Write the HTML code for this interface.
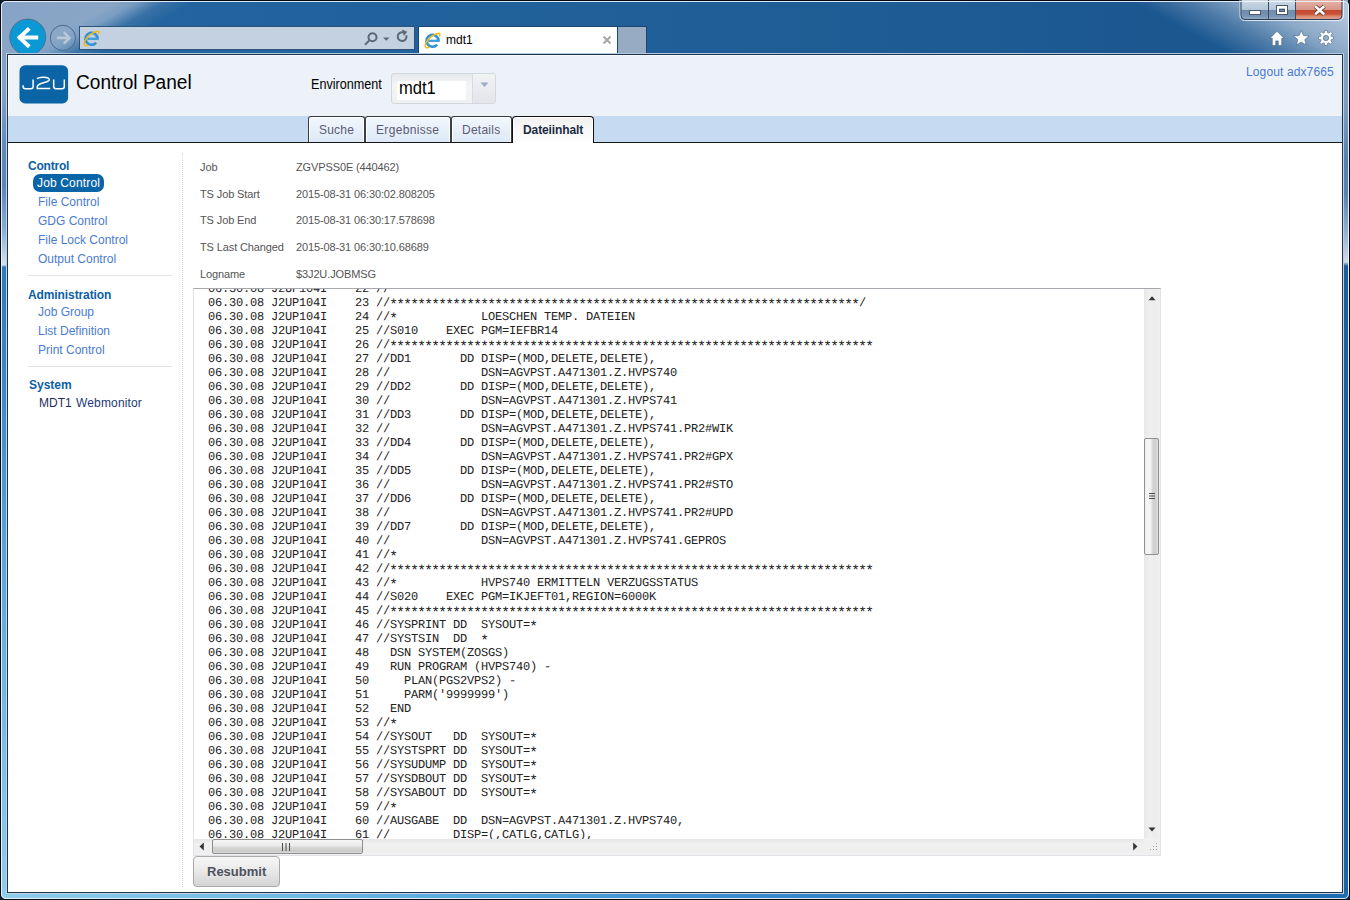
<!DOCTYPE html>
<html><head><meta charset="utf-8">
<style>
*{box-sizing:border-box;margin:0;padding:0}
html,body{width:1350px;height:900px;overflow:hidden;background:#0a1a2a}
body{position:relative;font-family:"Liberation Sans",sans-serif}
.a{position:absolute}
.t{white-space:pre}
.st{font-size:14.5px;letter-spacing:-1.7013px;line-height:0;position:relative;top:3.2px;left:-0.7px}
#win{left:0;top:0;width:1350px;height:900px;border:1px solid #050a12;border-radius:6px 6px 6px 6px;overflow:hidden;
 background:linear-gradient(to bottom,#86a3c5 0,#84a1c4 90px,#6089b8 150px,#5a87ba 185px,#88acd2 228px,#c5d6e8 256px,#d0dfee 264px,#2b7cbf 266px,#3a88c8 380px,#5aa6db 560px,#7cc0e6 760px,#8ecdeb 900px)}
#winhl{left:1px;top:1px;width:1348px;height:898px;border:1px solid rgba(240,246,252,.9);border-radius:5px}
#rightcol{left:1343px;top:0;width:5px;height:893px;background:linear-gradient(to bottom,#8fa9c7 0,#7f9cbf 110px,#5580ae 160px,#5a84b0 195px,#9ab4d0 235px,#cfdbe8 262px,#1f5e9c 266px,#1f64a6 893px)}
#botrow{left:1px;top:892px;width:1348px;height:7px;border-radius:0 0 5px 5px;background:linear-gradient(to right,#8ecdeb 0,#6db8e4 300px,#3d8fd0 700px,#2370b5 1100px,#1f6db0 1350px)}
#title{left:1px;top:1px;width:1348px;height:52px;border-radius:5px 5px 0 0;
 background:
  linear-gradient(150deg,rgba(134,162,196,1) 0,rgba(138,166,199,1) 8%,rgba(150,176,205,.75) 9.5%,rgba(120,150,190,.25) 11.5%,rgba(120,150,190,0) 13.5%),
  linear-gradient(28deg,rgba(150,178,208,0) 85%,rgba(140,168,200,.45) 89%,rgba(160,184,210,.85) 93%,rgba(180,198,220,1) 98%),
  linear-gradient(to right,#2466a0,#22629c 30%,#1f5d95 60%,#1c5790 85%,#1d5a90)}
#content{left:8px;top:55px;width:1334px;height:837px;background:#fff;overflow:hidden}
#cborder{left:6px;top:53px;width:1338px;height:841px;border:1px solid #c4d3e4;border-top-color:#b4c8de}
#cborder2{left:7px;top:54px;width:1336px;height:839px;border:1px solid #1b3550;}
</style></head>
<body>
<div id="win" class="a"></div>
<div id="rightcol" class="a"></div>
<div id="botrow" class="a"></div>
<div id="title" class="a"></div>

<svg class="a" style="left:0;top:0" width="1350" height="54" viewBox="0 0 1350 54">
 <defs>
  <linearGradient id="gmin" x1="0" y1="0" x2="0" y2="1">
   <stop offset="0" stop-color="#cfdbe8"/><stop offset=".5" stop-color="#b4c6da"/><stop offset=".55" stop-color="#6f8aab"/><stop offset=".85" stop-color="#7893b3"/><stop offset="1" stop-color="#94abc6"/>
  </linearGradient>
  <linearGradient id="gcls" x1="0" y1="0" x2="0" y2="1">
   <stop offset="0" stop-color="#e6b2a8"/><stop offset=".5" stop-color="#d8968a"/><stop offset=".55" stop-color="#c4482e"/><stop offset=".75" stop-color="#c9553a"/><stop offset=".85" stop-color="#d88a70"/><stop offset="1" stop-color="#e0a090"/>
  </linearGradient>
  <radialGradient id="gie" cx=".5" cy=".5" r=".55">
   <stop offset="0" stop-color="#a8e2fc"/><stop offset="1" stop-color="#2a8ad4"/>
  </radialGradient>
  <g id="ie">
   <path d="M14.4 8.8A5.9 5.9 0 1 0 13 12.6" fill="none" stroke="url(#gie)" stroke-width="2.8"/>
   <path d="M4.2 8.8H15.8" stroke="#3d9fe0" stroke-width="2.3"/>
   <path d="M5.5 15.3C3 16.2 .9 15.4 1.1 13.4 1.5 10 5.5 5 10 2.8 13 1.3 15.6.8 15.9 2c.2.8-.1 1.8-.7 2.4" fill="none" stroke="#f4ba10" stroke-width="1.5"/>
  </g>
 </defs>
 <!-- back button -->
 <circle cx="27.8" cy="37.1" r="18" fill="#0b99d6" stroke="#4f6f8c" stroke-width="1"/>
 <path d="M18.2 37.5H38.2" stroke="#fff" stroke-width="4"/>
 <path d="M29.3 28.4L19.6 37.6 29.3 46.8" fill="none" stroke="#fff" stroke-width="4"/>
 <!-- forward -->
 <circle cx="62.9" cy="37.9" r="12.6" fill="rgba(150,175,205,.18)" stroke="#4d6a8a" stroke-width="1"/>
 <path d="M56.8 37.9H69.4M63.8 32.2L69.4 37.9 63.8 43.6" fill="none" stroke="#b9c8d8" stroke-width="2.6"/>
 <!-- address bar -->
 <rect x="79.5" y="26.5" width="335" height="23" fill="#c3d1e1" stroke="#2d5379" stroke-width="1"/>
 <use href="#ie" x="83" y="30"/>
 <g fill="none" stroke="#5e6875" stroke-width="2">
  <circle cx="372.5" cy="37.2" r="4"/>
  <path d="M369.6 40.1L365 44.7"/>
 </g>
 <path d="M383 37.5h6.5l-3.25 3.3z" fill="#5e6875"/>
 <path d="M406.3 35.2a4.4 4.4 0 1 1-3.2-2.9" fill="none" stroke="#5e6875" stroke-width="2"/>
 <path d="M402 29.6l5.3 2.2-3.5 4.2z" fill="#5e6875"/>
 <!-- tab -->
 <rect x="418.5" y="26.5" width="199" height="28" fill="#fff" stroke="#1a4670" stroke-width="1"/>
 <use href="#ie" x="424" y="32"/>
 <path d="M603.5 36.5L610.5 43.5M610.5 36.5L603.5 43.5" stroke="#a6a6a6" stroke-width="2"/>
 <rect x="617.5" y="26.5" width="29" height="28" fill="#97abc3" stroke="#1a4670" stroke-width="1"/>
 <!-- window controls -->
 <path d="M1240.5 0V15.5a4.5 4.5 0 0 0 4.5 4.5H1338.5a4.5 4.5 0 0 0 4.5-4.5V0" fill="rgba(220,230,240,.6)"/>
 <path d="M1241.5 0V15a4 4 0 0 0 4 4H1268V0z" fill="url(#gmin)"/>
 <path d="M1269 0H1295V19H1269z" fill="url(#gmin)"/>
 <path d="M1296 0H1342V15a4 4 0 0 1-4 4H1296z" fill="url(#gcls)"/>
 <path d="M1240 0V16a4.5 4.5 0 0 0 4.5 4.5H1339a4.5 4.5 0 0 0 4.5-4.5V0" fill="none" stroke="rgba(235,242,250,.85)" stroke-width="1"/>
 <path d="M1241 0V15.5a4 4 0 0 0 4 4H1338a4 4 0 0 0 4-4V0" fill="none" stroke="#2b3d52" stroke-width="1"/>
 <path d="M1268.5 0V19M1295.5 0V19" stroke="#3d4d60" stroke-width="1"/>
 <rect x="1249.5" y="10.5" width="11" height="4" fill="#fff" stroke="#4a5868" stroke-width="1"/>
 <rect x="1276.5" y="5.5" width="11" height="9" fill="none" stroke="#4a5868" stroke-width="1"/>
 <rect x="1278" y="7" width="8" height="6" fill="none" stroke="#fff" stroke-width="2"/>
 <rect x="1279.5" y="9.5" width="5" height="2" fill="none" stroke="#4a5868" stroke-width="1"/>
 <path d="M1315.2 6.2L1324.2 14.2M1324.2 6.2L1315.2 14.2" stroke="#55302a" stroke-width="4.2"/>
 <path d="M1315.2 6.2L1324.2 14.2M1324.2 6.2L1315.2 14.2" stroke="#fff" stroke-width="2.6"/>
 <!-- toolbar icons -->
 <path d="M1277 31.3L1270 38.3h2.3V45.5h3.4v-4.6h2.6v4.6h3.4V38.3h2.3z" fill="#fff" stroke="#35506e" stroke-width=".5"/>
 <path d="M1301.3 30.5l2.2 5.1 5.5.4-4.2 3.6 1.3 5.4-4.8-2.9-4.8 2.9 1.3-5.4-4.2-3.6 5.5-.4z" fill="#fff" stroke="#35506e" stroke-width=".5"/>
 <g transform="translate(1326,38)"><path d="M5.41 -1.44 L7.50 -1.21 L7.50 1.21 L5.41 1.44 L4.84 2.81 L6.16 4.45 L4.45 6.16 L2.81 4.84 L1.44 5.41 L1.21 7.50 L-1.21 7.50 L-1.44 5.41 L-2.81 4.84 L-4.45 6.16 L-6.16 4.45 L-4.84 2.81 L-5.41 1.44 L-7.50 1.21 L-7.50 -1.21 L-5.41 -1.44 L-4.84 -2.81 L-6.16 -4.45 L-4.45 -6.16 L-2.81 -4.84 L-1.44 -5.41 L-1.21 -7.50 L1.21 -7.50 L1.44 -5.41 L2.81 -4.84 L4.45 -6.16 L6.16 -4.45 L4.84 -2.81Z M2.7 0 A2.7 2.7 0 1 0 -2.7 0 A2.7 2.7 0 1 0 2.7 0Z" fill="#fff" fill-rule="evenodd" stroke="#35506e" stroke-width=".5"/></g>
</svg>
<div class="a t" style="left:446px;top:34px;font-size:12px;line-height:12px;color:#000">mdt1</div>
<div id="winhl" class="a"></div>
<div id="cborder" class="a"></div>
<div id="cborder2" class="a"></div>
<div id="content" class="a"></div>
<div class="a" style="left:8px;top:55px;width:1334px;height:61px;background:#edf1f8;border-top:1px solid #f7f9fd;border-left:1px solid #fafcfe"></div>
<div class="a" style="left:8px;top:116px;width:1334px;height:26px;background:#c6dbf1"></div>
<div class="a" style="left:8px;top:142px;width:1334px;height:1px;background:#161616"></div>
<svg class="a" style="left:0;top:0" width="80" height="110">
<rect x="19.5" y="65.3" width="48.6" height="38.2" rx="5.6" fill="#0a64a5"/>
<g fill="none" stroke="#fff" stroke-width="1.5">
<path d="M23.1 85.2V86.6a2.2 2.2 0 0 0 2.2 2.2h5.6a2.2 2.2 0 0 0 2.2-2.2V79.6"/>
<path d="M37 78.6C39.5 76.6 48.6 76.4 49.3 79.6C49.9 82.6 38.2 82.3 37.3 86.3V88.5H50.2"/>
<path d="M53.7 79.6V86.6a2.2 2.2 0 0 0 2.2 2.2h6.2a2.2 2.2 0 0 0 2.2-2.2V79.6"/>
</g></svg>
<div class="a t" style="left:75.7px;top:72.1px;font-size:20px;line-height:20px;color:#000;font-weight:normal;transform:scaleX(.955);transform-origin:0 0">Control Panel</div>
<div class="a t" style="left:311px;top:77.15px;font-size:14px;line-height:14px;color:#000;font-weight:normal;transform:scaleX(.9);transform-origin:0 0">Environment</div>
<div class="a" style="left:391px;top:73px;width:105px;height:31px;border:1px solid #d4d8de;border-radius:3px;background:linear-gradient(#e6e8eb,#f4f5f7 40%,#eef0f2)"></div>
<div class="a" style="left:397px;top:81px;width:69px;height:19px;background:#fff"></div>
<div class="a" style="left:472px;top:74px;width:1px;height:29px;background:#d8dbe0"></div>
<div class="a" style="left:473px;top:74px;width:22px;height:29px;border-radius:0 2px 2px 0;background:linear-gradient(#f2f3f5,#e2e4e8)"></div>
<svg class="a" style="left:480px;top:82px" width="10" height="6"><path d="M0.5 0.5h8l-4 4.5z" fill="#9aaec6"/></svg>
<div class="a t" style="left:398.5px;top:79.0px;font-size:18px;line-height:18px;color:#000;font-weight:normal;transform:scaleX(.92);transform-origin:0 0">mdt1</div>
<div class="a t" style="left:1246px;top:65.84px;font-size:12px;line-height:12px;color:#4a7bd2;font-weight:normal;letter-spacing:0.12px">Logout adx7665</div>
<div class="a" style="left:308px;top:116px;width:57px;height:26px;border:1px solid #3b3e45;border-bottom:none;border-radius:3px 3px 0 0;background:linear-gradient(#f2f7fd,#dde9f6);box-shadow:inset 1px 1px 0 #fff,inset -1px 0 0 #fff"></div>
<div class="a" style="left:365px;top:116px;width:86px;height:26px;border:1px solid #3b3e45;border-bottom:none;border-radius:3px 3px 0 0;background:linear-gradient(#f2f7fd,#dde9f6);box-shadow:inset 1px 1px 0 #fff,inset -1px 0 0 #fff"></div>
<div class="a" style="left:451px;top:116px;width:61px;height:26px;border:1px solid #3b3e45;border-bottom:none;border-radius:3px 3px 0 0;background:linear-gradient(#f2f7fd,#dde9f6);box-shadow:inset 1px 1px 0 #fff,inset -1px 0 0 #fff"></div>
<div class="a" style="left:512px;top:116px;width:82px;height:27px;border:1px solid #111;border-bottom:none;border-radius:4px 4px 0 0;background:linear-gradient(#f0f0f0,#fafafa 60%,#fff);box-shadow:inset 1px 1px 0 #fff,inset -1px 0 0 #fff"></div>
<div class="a t" style="left:319px;top:123.84px;font-size:12px;line-height:12px;color:#5b5b73;font-weight:normal;letter-spacing:.2px">Suche</div>
<div class="a t" style="left:376px;top:123.84px;font-size:12px;line-height:12px;color:#5b5b73;font-weight:normal;letter-spacing:.33px">Ergebnisse</div>
<div class="a t" style="left:462px;top:123.84px;font-size:12px;line-height:12px;color:#5b5b73;font-weight:normal;letter-spacing:.25px">Details</div>
<div class="a t" style="left:523px;top:123.84px;font-size:12px;line-height:12px;color:#1b2a44;font-weight:bold;letter-spacing:-.1px">Dateiinhalt</div>
<div class="a t" style="left:28px;top:159.84px;font-size:12px;line-height:12px;color:#0c5fa6;font-weight:bold;letter-spacing:-.2px">Control</div>
<div class="a" style="left:33px;top:174px;width:71px;height:18px;border-radius:7px;background:#0965a7"></div>
<div class="a t" style="left:37px;top:176.84px;font-size:12px;line-height:12px;color:#fff;font-weight:normal;letter-spacing:.15px">Job Control</div>
<div class="a t" style="left:38px;top:195.84px;font-size:12px;line-height:12px;color:#4a7bd2;font-weight:normal;">File Control</div>
<div class="a t" style="left:38px;top:214.84px;font-size:12px;line-height:12px;color:#4a7bd2;font-weight:normal;">GDG Control</div>
<div class="a t" style="left:38px;top:233.84px;font-size:12px;line-height:12px;color:#4a7bd2;font-weight:normal;">File Lock Control</div>
<div class="a t" style="left:38px;top:252.84px;font-size:12px;line-height:12px;color:#4a7bd2;font-weight:normal;">Output Control</div>
<div class="a" style="left:28px;top:275px;width:144px;height:1px;background:#e3e3e3"></div>
<div class="a t" style="left:28px;top:288.84px;font-size:12px;line-height:12px;color:#0c5fa6;font-weight:bold;letter-spacing:-.1px">Administration</div>
<div class="a t" style="left:38px;top:305.84px;font-size:12px;line-height:12px;color:#4a7bd2;font-weight:normal;">Job Group</div>
<div class="a t" style="left:38px;top:324.84px;font-size:12px;line-height:12px;color:#4a7bd2;font-weight:normal;">List Definition</div>
<div class="a t" style="left:38px;top:343.84px;font-size:12px;line-height:12px;color:#4a7bd2;font-weight:normal;">Print Control</div>
<div class="a" style="left:28px;top:366px;width:144px;height:1px;background:#e3e3e3"></div>
<div class="a t" style="left:29px;top:378.84px;font-size:12px;line-height:12px;color:#0c5fa6;font-weight:bold;">System</div>
<div class="a t" style="left:39px;top:396.84px;font-size:12px;line-height:12px;color:#1c2f5c;font-weight:normal;">MDT1</div><div class="a t" style="left:76px;top:396.84px;font-size:12px;line-height:12px;color:#1f3a78;font-weight:normal;letter-spacing:.15px">Webmonitor</div>
<div class="a" style="left:182px;top:153px;width:1px;height:734px;border-left:1px dotted #d8d8d8"></div>
<div class="a t" style="left:200px;top:161.69px;font-size:11px;line-height:11px;color:#555;font-weight:normal;letter-spacing:-.12px">Job</div>
<div class="a t" style="left:296px;top:161.69px;font-size:11px;line-height:11px;color:#555;font-weight:normal;letter-spacing:-.12px">ZGVPSS0E (440462)</div>
<div class="a t" style="left:200px;top:188.69px;font-size:11px;line-height:11px;color:#555;font-weight:normal;letter-spacing:-.12px">TS Job Start</div>
<div class="a t" style="left:296px;top:188.69px;font-size:11px;line-height:11px;color:#555;font-weight:normal;letter-spacing:-.12px">2015-08-31 06:30:02.808205</div>
<div class="a t" style="left:200px;top:214.69px;font-size:11px;line-height:11px;color:#555;font-weight:normal;letter-spacing:-.12px">TS Job End</div>
<div class="a t" style="left:296px;top:214.69px;font-size:11px;line-height:11px;color:#555;font-weight:normal;letter-spacing:-.12px">2015-08-31 06:30:17.578698</div>
<div class="a t" style="left:200px;top:241.69px;font-size:11px;line-height:11px;color:#555;font-weight:normal;letter-spacing:-.12px">TS Last Changed</div>
<div class="a t" style="left:296px;top:241.69px;font-size:11px;line-height:11px;color:#555;font-weight:normal;letter-spacing:-.12px">2015-08-31 06:30:10.68689</div>
<div class="a t" style="left:200px;top:268.69px;font-size:11px;line-height:11px;color:#555;font-weight:normal;letter-spacing:-.12px">Logname</div>
<div class="a t" style="left:296px;top:268.69px;font-size:11px;line-height:11px;color:#555;font-weight:normal;letter-spacing:-.12px">$3J2U.JOBMSG</div>
<div class="a" style="left:193px;top:288px;width:968px;height:568px;border:1px solid #dfe3e8;border-top-color:#a5a9ae;background:#fff;overflow:hidden">
<pre class="a" style="left:14px;top:-7.11px;margin:0;font-family:'Liberation Mono',monospace;font-size:12.0px;letter-spacing:-0.2011px;line-height:14px;text-rendering:geometricPrecision;color:#222">06.30.08 J2UP104I    22 //
06.30.08 J2UP104I    23 //<span class="st">*******************************************************************</span>/
06.30.08 J2UP104I    24 //<span class="st">*</span>            LOESCHEN TEMP. DATEIEN
06.30.08 J2UP104I    25 //S010    EXEC PGM=IEFBR14
06.30.08 J2UP104I    26 //<span class="st">*********************************************************************</span>
06.30.08 J2UP104I    27 //DD1       DD DISP=(MOD,DELETE,DELETE),
06.30.08 J2UP104I    28 //             DSN=AGVPST.A471301.Z.HVPS740
06.30.08 J2UP104I    29 //DD2       DD DISP=(MOD,DELETE,DELETE),
06.30.08 J2UP104I    30 //             DSN=AGVPST.A471301.Z.HVPS741
06.30.08 J2UP104I    31 //DD3       DD DISP=(MOD,DELETE,DELETE),
06.30.08 J2UP104I    32 //             DSN=AGVPST.A471301.Z.HVPS741.PR2#WIK
06.30.08 J2UP104I    33 //DD4       DD DISP=(MOD,DELETE,DELETE),
06.30.08 J2UP104I    34 //             DSN=AGVPST.A471301.Z.HVPS741.PR2#GPX
06.30.08 J2UP104I    35 //DD5       DD DISP=(MOD,DELETE,DELETE),
06.30.08 J2UP104I    36 //             DSN=AGVPST.A471301.Z.HVPS741.PR2#STO
06.30.08 J2UP104I    37 //DD6       DD DISP=(MOD,DELETE,DELETE),
06.30.08 J2UP104I    38 //             DSN=AGVPST.A471301.Z.HVPS741.PR2#UPD
06.30.08 J2UP104I    39 //DD7       DD DISP=(MOD,DELETE,DELETE),
06.30.08 J2UP104I    40 //             DSN=AGVPST.A471301.Z.HVPS741.GEPROS
06.30.08 J2UP104I    41 //<span class="st">*</span>
06.30.08 J2UP104I    42 //<span class="st">*********************************************************************</span>
06.30.08 J2UP104I    43 //<span class="st">*</span>            HVPS740 ERMITTELN VERZUGSSTATUS
06.30.08 J2UP104I    44 //S020    EXEC PGM=IKJEFT01,REGION=6000K
06.30.08 J2UP104I    45 //<span class="st">*********************************************************************</span>
06.30.08 J2UP104I    46 //SYSPRINT DD  SYSOUT=<span class="st">*</span>
06.30.08 J2UP104I    47 //SYSTSIN  DD  <span class="st">*</span>
06.30.08 J2UP104I    48   DSN SYSTEM(ZOSGS)
06.30.08 J2UP104I    49   RUN PROGRAM (HVPS740) -
06.30.08 J2UP104I    50     PLAN(PGS2VPS2) -
06.30.08 J2UP104I    51     PARM('9999999')
06.30.08 J2UP104I    52   END
06.30.08 J2UP104I    53 //<span class="st">*</span>
06.30.08 J2UP104I    54 //SYSOUT   DD  SYSOUT=<span class="st">*</span>
06.30.08 J2UP104I    55 //SYSTSPRT DD  SYSOUT=<span class="st">*</span>
06.30.08 J2UP104I    56 //SYSUDUMP DD  SYSOUT=<span class="st">*</span>
06.30.08 J2UP104I    57 //SYSDBOUT DD  SYSOUT=<span class="st">*</span>
06.30.08 J2UP104I    58 //SYSABOUT DD  SYSOUT=<span class="st">*</span>
06.30.08 J2UP104I    59 //<span class="st">*</span>
06.30.08 J2UP104I    60 //AUSGABE  DD  DSN=AGVPST.A471301.Z.HVPS740,
06.30.08 J2UP104I    61 //         DISP=(,CATLG,CATLG),
06.30.08 J2UP104I    62 //         UNIT=SYSDA,</pre>

<div class="a" style="left:950px;top:0;width:16px;height:550px;background:linear-gradient(to right,#e8e8e8,#f0f0f0 40%,#ececec 60%,#f0f0f0)"></div>
<svg class="a" style="left:949px;top:0" width="17" height="20"><path d="M5.5 11.2h7l-3.5-4z" fill="#303538"/></svg>
<svg class="a" style="left:949px;top:531px" width="17" height="20"><path d="M5.5 7.6h7l-3.5 4z" fill="#303538"/></svg>
<div class="a" style="left:950px;top:149px;width:15px;height:117px;border:1px solid #8e8e8e;border-radius:2px;background:linear-gradient(to right,#f2f2f2,#f6f6f6 40%,#d4d4d4 60%,#cfcfcf 85%,#e4e4e4)"></div>
<svg class="a" style="left:954px;top:203px" width="8" height="8"><path d="M1 1.5h6M1 4h6M1 6.5h6" stroke="#4a4a4a" stroke-width="1"/></svg>
<div class="a" style="left:0;top:550px;width:949px;height:17px;background:linear-gradient(#e6e6e6,#f0f0f0 30%,#eeeeee 70%,#f2f2f2)"></div>
<svg class="a" style="left:0;top:550px" width="16" height="17"><path d="M9.8 3.5v8l-4.3-4z" fill="#303538"/></svg>
<svg class="a" style="left:933px;top:550px" width="16" height="17"><path d="M6.2 3.5v8l4.3-4z" fill="#303538"/></svg>
<div class="a" style="left:18px;top:550px;width:151px;height:15px;border:1px solid #8e8e8e;border-radius:2px;background:linear-gradient(#f4f4f4,#ececec 40%,#d6d6d6 60%,#cacaca 90%,#e0e0e0)"></div>
<svg class="a" style="left:87px;top:553px" width="10" height="10"><path d="M1.5 1v8M5 1v8M8.5 1v8" stroke="#4a4a4a" stroke-width="1"/></svg>
<div class="a" style="left:949px;top:549px;width:17px;height:17px;background:#f0f0f0"></div>
<svg class="a" style="left:949px;top:549px" width="17" height="17"><g fill="#9a9a9a"><rect x="13" y="5" width="1" height="1"/><rect x="10" y="8" width="1" height="1"/><rect x="13" y="8" width="1" height="1"/><rect x="7" y="11" width="1" height="1"/><rect x="10" y="11" width="1" height="1"/><rect x="13" y="11" width="1" height="1"/></g></svg>

</div>


<div class="a" style="left:193px;top:856px;width:87px;height:31px;border:1px solid #a9a9a9;border-radius:4px;background:linear-gradient(#f7f7f7,#e8e8e8 50%,#d4d4d4)"></div>
<div class="a t" style="left:207px;top:865px;font-size:13px;line-height:13px;font-weight:bold;color:#4d5260">Resubmit</div>
</body></html>
